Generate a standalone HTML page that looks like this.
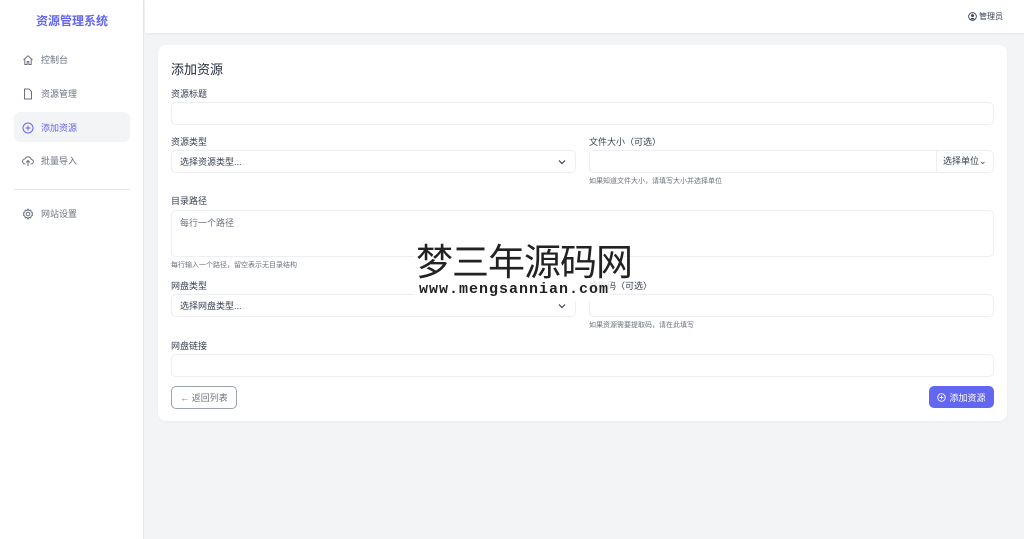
<!DOCTYPE html>
<html><head><meta charset="utf-8"><style>
*{box-sizing:border-box;margin:0;padding:0}
body{width:1024px;height:539px;background:#f3f4f6;font-family:"Liberation Sans","Noto Sans CJK SC",sans-serif;position:relative;overflow:hidden;color:#374151}
.abs{position:absolute}
#side{left:0;top:0;width:144px;height:539px;background:#fff;border-right:1px solid #e5e7eb}
.logo{left:0;width:144px;top:12px;text-align:center;color:#6366f1;font-weight:bold;font-size:12px}
.nav{left:22px;font-size:9px;color:#6b7280;display:flex;align-items:center;gap:7px}
.nav svg{width:12px;height:12px}
.nav svg *{fill:none;stroke:#6b7280;stroke-width:1}
#hdr{left:145px;top:0;width:879px;height:33px;background:#fff;box-shadow:0 1px 3px rgba(0,0,0,.06)}
#card{left:158px;top:45px;width:849px;height:376px;background:#fff;border-radius:8px;box-shadow:0 1px 2px rgba(0,0,0,.04)}
.lbl{font-size:9px;color:#374151}
.inp{border:1px solid #eceef1;border-radius:5px;background:#fff;font-size:9px;color:#374151;padding-left:8px;display:flex;align-items:center}
.hint{font-size:7px;color:#6b7280}
.chev{position:absolute;right:9px;top:8px;width:8px;height:6px}
</style></head><body>
<div id="side" class="abs">
<div class="abs logo">资源管理系统</div>
<div class="abs" style="left:14px;top:112px;width:116px;height:30px;background:#f3f4f6;border-radius:6px"></div>
<div class="abs nav" style="top:53px"><svg viewBox="0 0 12 12"><path d="M1.5 6L6 1.8 10.5 6M2.8 5v5.5h2.4V7.5h1.6v3h2.4V5"/></svg>控制台</div>
<div class="abs nav" style="top:87px"><svg viewBox="0 0 12 12"><path d="M2.5 1h4.5l2.5 2.5v7.5h-7z"/></svg>资源管理</div>
<div class="abs nav" style="top:121px;color:#6366f1"><svg viewBox="0 0 12 12"><circle cx="6" cy="6" r="5" style="stroke:#6366f1"/><path d="M6 3.5v5M3.5 6h5" style="stroke:#6366f1"/></svg>添加资源</div>
<div class="abs nav" style="top:154px"><svg viewBox="0 0 12 12"><path d="M3.5 9H3a2.5 2.5 0 0 1 0-5 3.3 3.3 0 0 1 6.3 0.5A2.2 2.2 0 0 1 9 9h-.5M6 11V5.5M4 7.5l2-2 2 2"/></svg>批量导入</div>
<div class="abs" style="left:14px;top:189px;width:116px;height:1px;background:#e5e7eb"></div>
<div class="abs nav" style="top:207px"><svg viewBox="0 0 12 12"><circle cx="6" cy="6" r="1.8"/><path d="M6 1l1 1.5 1.7-.4.4 1.7L10.6 5 10 6l.6 1-1.5 1.2-.4 1.7-1.7-.4L6 11l-1-1.5-1.7.4-.4-1.7L1.4 7 2 6l-.6-1 1.5-1.2.4-1.7 1.7.4z"/></svg>网站设置</div>
</div>
<div id="hdr" class="abs"><div class="abs" style="right:21px;top:11px;font-size:8px;color:#374151;display:flex;align-items:center;gap:2px"><svg width="9" height="9" viewBox="0 0 10 10"><circle cx="5" cy="5" r="4.3" fill="none" stroke="#374151"/><circle cx="5" cy="4" r="1.6" fill="#374151"/><path d="M2.3 8.2a3 3 0 0 1 5.4 0" fill="#374151"/></svg>管理员</div></div>
<div id="card" class="abs"></div>
<div class="abs" style="left:171px;top:59px;font-size:13px;color:#1f2937">添加资源</div>
<div class="abs lbl" style="left:171px;top:87px">资源标题</div>
<div class="abs inp" style="left:171px;top:102px;width:823px;height:23px"></div>
<div class="abs lbl" style="left:171px;top:135px">资源类型</div>
<div class="abs inp" style="left:171px;top:150px;width:405px;height:23px">选择资源类型...<svg class="chev" viewBox="0 0 8 6"><path d="M1 1.5l3 3 3-3" fill="none" stroke="#374151" stroke-width="1.2"/></svg></div>
<div class="abs lbl" style="left:589px;top:135px">文件大小（可选）</div>
<div class="abs inp" style="left:589px;top:150px;width:405px;height:23px;padding:0"><div style="position:absolute;left:346px;top:0;height:21px;border-left:1px solid #eceef1;width:58px;padding-left:6px;line-height:21px">选择单位⌄</div></div>
<div class="abs hint" style="left:589px;top:176px">如果知道文件大小，请填写大小并选择单位</div>
<div class="abs lbl" style="left:171px;top:194px">目录路径</div>
<div class="abs inp" style="left:171px;top:210px;width:823px;height:47px;align-items:flex-start;padding-top:5px;color:#6b7280">每行一个路径</div>
<div class="abs hint" style="left:171px;top:260px">每行输入一个路径，留空表示无目录结构</div>
<div class="abs lbl" style="left:171px;top:279px">网盘类型</div>
<div class="abs inp" style="left:171px;top:294px;width:405px;height:23px">选择网盘类型...<svg class="chev" viewBox="0 0 8 6"><path d="M1 1.5l3 3 3-3" fill="none" stroke="#374151" stroke-width="1.2"/></svg></div>
<div class="abs lbl" style="left:589px;top:279px">提取码（可选）</div>
<div class="abs inp" style="left:589px;top:294px;width:405px;height:23px"></div>
<div class="abs hint" style="left:589px;top:320px">如果资源需要提取码，请在此填写</div>
<div class="abs lbl" style="left:171px;top:339px">网盘链接</div>
<div class="abs inp" style="left:171px;top:354px;width:823px;height:23px"></div>
<div class="abs" style="left:171px;top:386px;width:66px;height:23px;border:1px solid #9ca3af;border-radius:5px;font-size:9px;color:#6b7280;display:flex;align-items:center;justify-content:center;gap:4px">← 返回列表</div>
<div class="abs" style="left:929px;top:386px;width:65px;height:22px;background:#6366f1;border-radius:5px;font-size:9px;color:#fff;display:flex;align-items:center;justify-content:center;gap:3px"><svg width="9" height="9" viewBox="0 0 10 10"><circle cx="5" cy="5" r="4.2" fill="none" stroke="#fff"/><path d="M5 3v4M3 5h4" stroke="#fff"/></svg>添加资源</div>
<div class="abs" style="left:414px;top:240px;width:196px;height:62px;background:rgba(255,255,255,.85)"></div>
<div class="abs" style="left:416px;top:238px;font-size:37px;color:#222;font-family:'Noto Sans CJK SC',sans-serif;line-height:42px;letter-spacing:-1px">梦三年源码网</div>
<div class="abs" style="left:419px;top:281px;font-size:15px;color:#222;font-family:'Liberation Mono',monospace;font-weight:bold;letter-spacing:1px">www.mengsannian.com</div>
</body></html>
